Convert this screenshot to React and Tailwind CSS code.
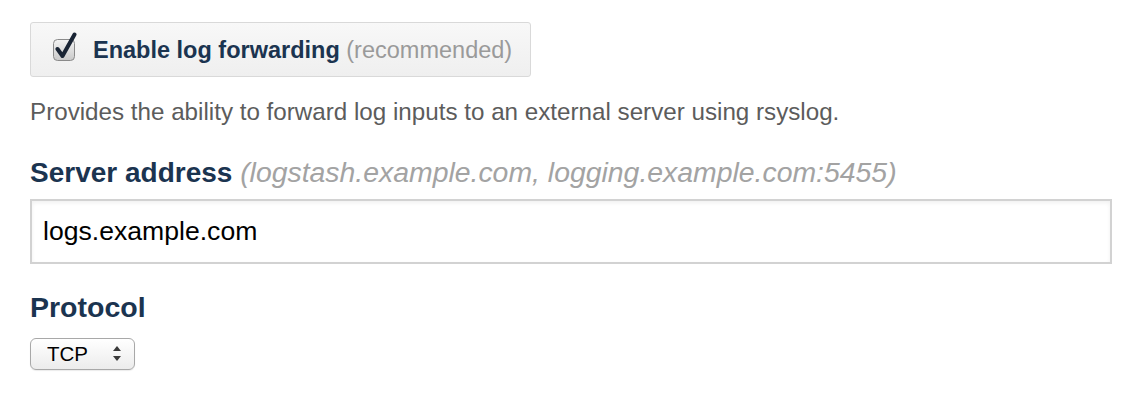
import { useState } from "react";

// Log forwarding settings panel
const CheckIcon = () => (
  <svg width="27" height="29" viewBox="0 0 27 29" className="shrink-0">
    <defs>
      <linearGradient id="cbg" x1="0" y1="0" x2="0" y2="1">
        <stop offset="0" stopColor="#f4f4f4" />
        <stop offset="1" stopColor="#c9c9c9" />
      </linearGradient>
    </defs>
    <rect x="1.5" y="7.5" width="21" height="21" rx="4" fill="url(#cbg)" stroke="#8a8a8a" />
    <path d="M5.5 17 L10.5 24 L22.5 2.5" fill="none" stroke="#1a2535" strokeWidth="4" strokeLinecap="round" strokeLinejoin="round" />
  </svg>
);

const App = () => {
  const [enabled, setEnabled] = useState(true);
  const [server, setServer] = useState("logs.example.com");
  const [protocol, setProtocol] = useState("TCP");

  return (
    <div className="min-h-[400px] bg-white pt-[22px] pl-[30px] font-['Liberation_Sans',Arial,sans-serif]">
      {/* case à cocher */}
      <label
        onClick={() => setEnabled(!enabled)}
        className="flex items-center w-[501px] h-[55px] pl-[21px] rounded-[3px] border border-[#d9d9d9] bg-gradient-to-b from-[#f8f8f8] to-[#efefef] cursor-pointer"
      >
        <span className="-mt-[6px]">
          <CheckIcon />
        </span>
        <span className="ml-[14px] text-[23.5px] leading-[30px]">
          <span className="font-bold text-[#1b3450]">Enable log forwarding</span>{" "}
          <span className="text-[#9a9a9a]">(recommended)</span>
        </span>
      </label>

      <p className="mt-[19px] text-[24.2px] leading-[32px] text-[#5c5c5c]">
        Provides the ability to forward log inputs to an external server using rsyslog.
      </p>

      <div className="mt-[27px] text-[28px] leading-[34px]">
        <span className="font-bold text-[#1b3450]">Server address</span>{" "}
        <span className="italic text-[28.4px] text-[#a3a3a3]">(logstash.example.com, logging.example.com:5455)</span>
      </div>

      <input
        value={server}
        onChange={(e) => setServer(e.target.value)}
        className="block mt-[9px] w-[1082px] h-[65px] px-[11px] border-2 border-[#d2d2d2] bg-white text-[26.6px] text-black outline-none shadow-[inset_0_2px_4px_rgba(0,0,0,0.06)]"
      />

      <div className="mt-[26px] text-[28.5px] leading-[34px] font-bold text-[#1b3450]">Protocol</div>

      <div className="relative mt-[14px] w-[105px] h-[32px]">
        <select
          value={protocol}
          onChange={(e) => setProtocol(e.target.value)}
          className="appearance-none w-full h-full pl-[16px] rounded-[6px] border border-[#a8a8a8] bg-gradient-to-b from-white to-[#ececec] text-[20.5px] text-black outline-none shadow-[0_1px_1px_rgba(0,0,0,0.08)]"
        >
          <option>TCP</option>
          <option>UDP</option>
        </select>
        <svg width="8" height="15" viewBox="0 0 8 15" className="absolute right-[14px] top-[8px] pointer-events-none">
          <path d="M4 0 L8 5 L0 5 Z" fill="#3a3a3a" />
          <path d="M0 10 L8 10 L4 15 Z" fill="#3a3a3a" />
        </svg>
      </div>
    </div>
  );
};

export default App;
